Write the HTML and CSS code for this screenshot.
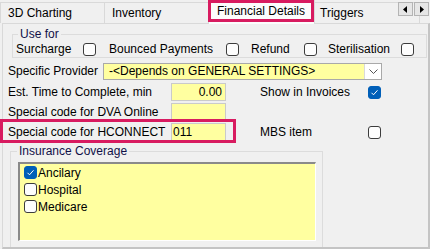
FILE: index.html
```html
<!DOCTYPE html>
<html>
<head>
<meta charset="utf-8">
<link rel="stylesheet" href="styles.css">
</head>
<body>
<div class="tabstrip">
  <div class="tab t1">3D Charting</div>
  <div class="tab t2">Inventory</div>
  <div class="tab sel">Financial Details</div>
  <div class="tab t4">Triggers</div>
  <div class="scroller">
    <span class="sbtn"><svg width="5" height="7" viewBox="0 0 5 7"><path d="M4 0 L0 3.5 L4 7 Z" fill="#000"/></svg></span>
    <span class="sbtn"><svg width="5" height="7" viewBox="0 0 5 7"><path d="M1 0 L5 3.5 L1 7 Z" fill="#000"/></svg></span>
  </div>
</div>
<div class="panel">
  <fieldset class="usefor">
    <legend>Use for</legend>
    <div class="checkrow">
      <span class="cl w-sur">Surcharge</span><span class="cb"></span>
      <span class="cl w-bou">Bounced Payments</span><span class="cb"></span>
      <span class="cl w-ref">Refund</span><span class="cb"></span>
      <span class="cl w-ste">Sterilisation</span><span class="cb"></span>
    </div>
  </fieldset>

  <div class="frow r1">
    <span class="lbl short">Specific Provider</span>
    <div class="combo">
      <span class="combo-text">-&lt;Depends on GENERAL SETTINGS&gt;</span>
      <span class="combo-btn"><svg width="9" height="5" viewBox="0 0 9 5"><path d="M0.5 0.5 L4.5 4.5 L8.5 0.5" fill="none" stroke="#555" stroke-width="1"/></svg></span>
    </div>
  </div>
  <div class="frow r2">
    <span class="lbl">Est. Time to Complete, min</span>
    <span class="inp num">0.00</span>
    <span class="side">Show in Invoices</span>
    <span class="cb on"><svg width="11" height="11" viewBox="0 0 11 11"><path d="M2.5 5.8 L4.5 7.8 L8.5 3.3" fill="none" stroke="#fff" stroke-width="1"/></svg></span>
  </div>
  <div class="frow r3">
    <span class="lbl">Special code for DVA Online</span>
    <span class="inp"></span>
  </div>
  <div class="frow r4">
    <span class="lbl">Special code for HCONNECT</span>
    <span class="inp">011</span>
    <span class="side">MBS item</span>
    <span class="cb"></span>
  </div>

  <fieldset class="ins">
    <legend>Insurance Coverage</legend>
    <div class="listbox">
      <div class="item"><span class="cb on"><svg width="11" height="11" viewBox="0 0 11 11"><path d="M2.5 5.8 L4.5 7.8 L8.5 3.3" fill="none" stroke="#fff" stroke-width="1"/></svg></span><span class="it">Ancilary</span></div>
      <div class="item"><span class="cb"></span><span class="it">Hospital</span></div>
      <div class="item"><span class="cb"></span><span class="it">Medicare</span></div>
    </div>
  </fieldset>
</div>
<div class="hl hl-tab"></div>
<div class="hl hl-row"></div>
</body>
</html>
```

FILE: styles.css
```css
* { box-sizing: border-box; }

body {
  margin: 0;
  width: 430px;
  height: 249px;
  background: #f0f0f0;
  font: 12px/14px "Liberation Sans", Arial, sans-serif;
  color: #000;
  overflow: hidden;
  position: relative;
}

/* tabs */
.tabstrip {
  display: flex;
  align-items: flex-end;
  height: 23px;
  position: relative;
}
.tab {
  height: 21px;
  border: 1px solid #d9d9d9;
  border-bottom: none;
  padding: 3px 0 0 7px;
  margin-right: -1px;
  background: #f0f0f0;
  white-space: nowrap;
}
.t1 { width: 105px; }
.t2 { width: 105px; }
.sel {
  width: 107px;
  height: 24px;
  margin-bottom: -1px;
  padding: 3px 0 0 8px;
  background: #fcfcfc;
  position: relative;
  z-index: 1;
}
.t4 { width: 106px; padding-left: 5px; }

.scroller {
  position: absolute;
  right: 1px;
  top: 2px;
  display: flex;
  z-index: 2;
}
.sbtn {
  width: 15px;
  height: 14px;
  background: #e6e6e6;
  border: 1px solid #b4b4b4;
  display: flex;
  align-items: center;
  justify-content: center;
  margin-left: 1px;
}

/* panel */
.panel {
  margin-left: 2px;
  width: 428px;
  height: 226px;
  border-top: 1px solid #d9d9d9;
  border-left: 1px solid #d9d9d9;
  border-right: 2px solid #c4c4c4;
  border-bottom: 2px solid #c4c4c4;
  overflow: hidden;
}

fieldset {
  border: 1px solid #dcdcdc;
  min-width: 0;
}
legend {
  padding: 0 2px;
  line-height: 13px;
  color: #101048;
}

.usefor {
  margin: 4px 1px 0 9px;
  padding: 1px 0 1px 3px;
}
.usefor legend { margin-left: 2px; }

.checkrow {
  display: flex;
  align-items: center;
  height: 14px;
}
.cl { white-space: nowrap; }
.w-sur { width: 67px; }
.w-bou { width: 117px; margin-left: 13px; }
.w-ref { width: 53px; margin-left: 12px; }
.w-ste { width: 73px; margin-left: 11px; }

.cb {
  width: 13px;
  height: 13px;
  flex-shrink: 0;
  border: 1px solid #3c3c3c;
  border-radius: 3px;
  background: #fdfdfd;
  display: flex;
  align-items: center;
  justify-content: center;
}
.cb.on {
  background: #005fb8;
  border-color: #005fb8;
}

/* form rows */
.frow {
  display: flex;
  align-items: center;
  height: 18px;
  padding-left: 5px;
  margin-top: 2px;
}
.r1 { margin-top: 4px; }
.r2 { margin-top: 3px; }

.lbl { width: 163px; white-space: nowrap; }
.lbl.short { width: 95px; }

.combo {
  width: 279px;
  height: 17px;
  border: 1px solid #a9a9a9;
  background: #ffffa0;
  display: flex;
  align-items: center;
}
.combo-text { padding-left: 5px; white-space: nowrap; }
.combo-btn {
  margin-left: auto;
  width: 17px;
  height: 15px;
  background: #fff;
  border-left: 1px solid #dadada;
  display: flex;
  align-items: center;
  justify-content: center;
}

.inp {
  width: 55px;
  height: 18px;
  border: 1px solid #cacaca;
  background: #ffffa0;
  padding: 1px 2px 0 1px;
  line-height: 15px;
}
.inp.num { text-align: right; padding-right: 3px; }

.side { width: 108px; margin-left: 34px; white-space: nowrap; }

/* insurance group */
.ins {
  margin: 4px 0 0 7px;
  width: 313px;
  padding: 4px 0 6px 7px;
}
.ins legend { margin-left: -1px; }

.listbox {
  width: 298px;
  height: 79px;
  background: #ffffa0;
  border-top: 2px solid #8a8a8a;
  border-left: 2px solid #8a8a8a;
  border-right: 1px solid #fff;
  border-bottom: 1px solid #fff;
  padding-left: 4px;
}
.item {
  display: flex;
  align-items: center;
  height: 17px;
}
.it { margin-left: 1px; }

/* highlight overlays */
.hl {
  position: absolute;
  border: 3px solid #d81b60;
  z-index: 5;
}
.hl-tab { left: 208px; top: 0; width: 106px; height: 22px; }
.hl-row { left: 0; top: 119px; width: 236px; height: 24px; }
```
